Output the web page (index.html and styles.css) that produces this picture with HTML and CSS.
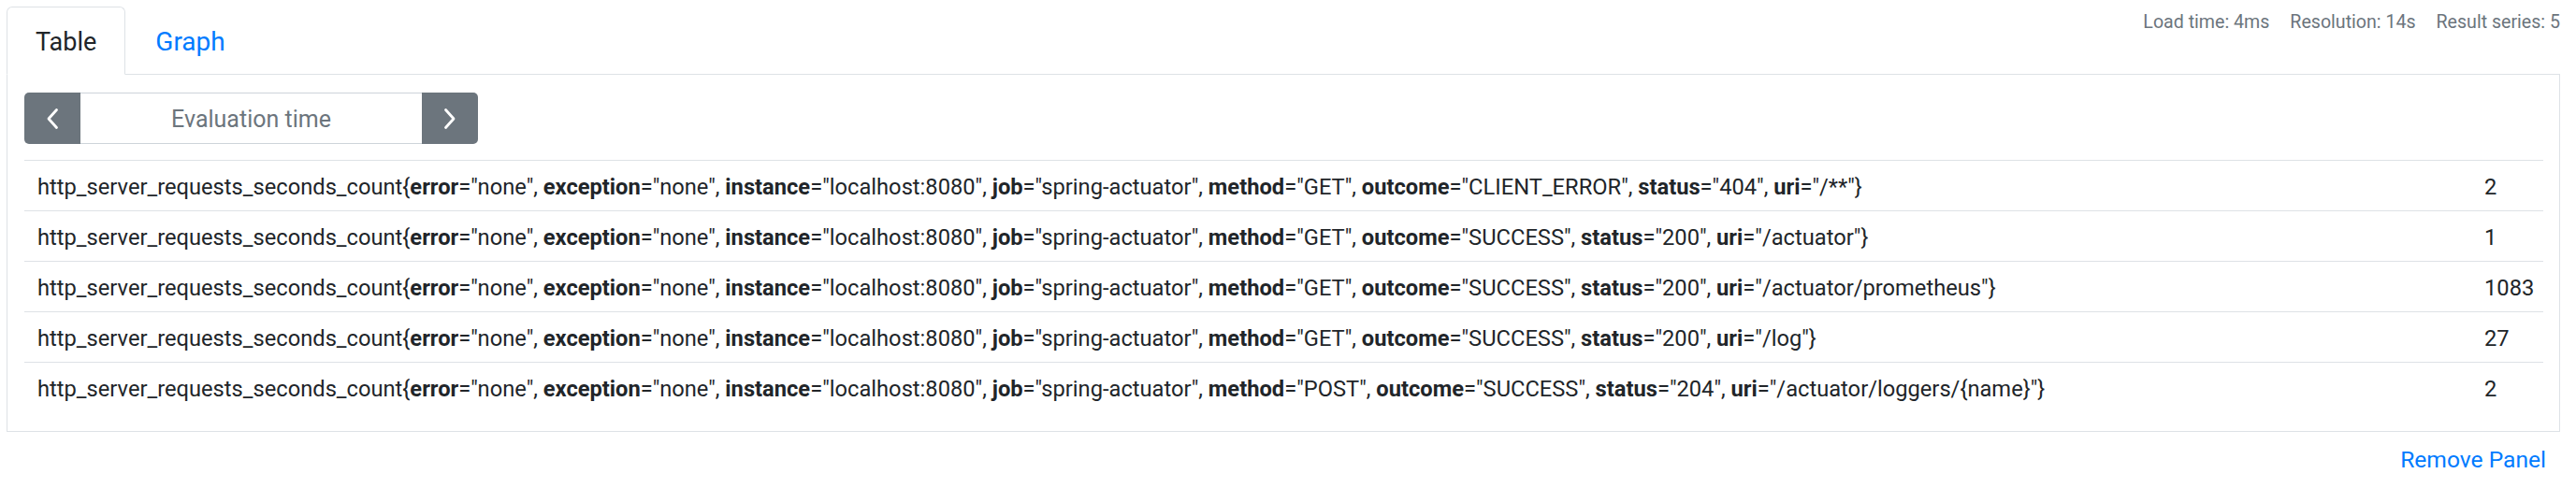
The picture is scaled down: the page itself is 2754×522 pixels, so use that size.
FILE: index.html
```html
<!DOCTYPE html>
<html lang="en">
<head>
<meta charset="utf-8">
<title>Prometheus panel</title>
<link rel="stylesheet" href="styles.css">
</head>
<body>
<div class="panel">
  <div class="nav-row">
    <ul class="tabs">
      <li class="tab active">Table</li>
      <li class="tab link">Graph</li>
    </ul>
    <div class="stats">
      <span>Load time: 4ms</span>
      <span>Resolution: 14s</span>
      <span>Result series: 5</span>
    </div>
  </div>
  <div class="tab-content">
    <div class="eval-group">
      <button class="eval-btn left" type="button" aria-label="Previous">
        <svg width="14" height="24" viewBox="0 0 14 24"><path d="M11.5 2.5 L3 12 L11.5 21.5" fill="none" stroke="#fff" stroke-width="2.8" stroke-linecap="round" stroke-linejoin="round"/></svg>
      </button>
      <div class="eval-input">Evaluation time</div>
      <button class="eval-btn right" type="button" aria-label="Next">
        <svg width="14" height="24" viewBox="0 0 14 24"><path d="M2.5 2.5 L11 12 L2.5 21.5" fill="none" stroke="#fff" stroke-width="2.8" stroke-linecap="round" stroke-linejoin="round"/></svg>
      </button>
    </div>
    <div class="table">
      <div class="row">
        <div class="series">http_server_requests_seconds_count{<b>error</b>="none", <b>exception</b>="none", <b>instance</b>="localhost:8080", <b>job</b>="spring-actuator", <b>method</b>="GET", <b>outcome</b>="CLIENT_ERROR", <b>status</b>="404", <b>uri</b>="/**"}</div>
        <div class="value">2</div>
      </div>
      <div class="row">
        <div class="series">http_server_requests_seconds_count{<b>error</b>="none", <b>exception</b>="none", <b>instance</b>="localhost:8080", <b>job</b>="spring-actuator", <b>method</b>="GET", <b>outcome</b>="SUCCESS", <b>status</b>="200", <b>uri</b>="/actuator"}</div>
        <div class="value">1</div>
      </div>
      <div class="row">
        <div class="series">http_server_requests_seconds_count{<b>error</b>="none", <b>exception</b>="none", <b>instance</b>="localhost:8080", <b>job</b>="spring-actuator", <b>method</b>="GET", <b>outcome</b>="SUCCESS", <b>status</b>="200", <b>uri</b>="/actuator/prometheus"}</div>
        <div class="value">1083</div>
      </div>
      <div class="row">
        <div class="series">http_server_requests_seconds_count{<b>error</b>="none", <b>exception</b>="none", <b>instance</b>="localhost:8080", <b>job</b>="spring-actuator", <b>method</b>="GET", <b>outcome</b>="SUCCESS", <b>status</b>="200", <b>uri</b>="/log"}</div>
        <div class="value">27</div>
      </div>
      <div class="row">
        <div class="series">http_server_requests_seconds_count{<b>error</b>="none", <b>exception</b>="none", <b>instance</b>="localhost:8080", <b>job</b>="spring-actuator", <b>method</b>="POST", <b>outcome</b>="SUCCESS", <b>status</b>="204", <b>uri</b>="/actuator/loggers/{name}"}</div>
        <div class="value">2</div>
      </div>
    </div>
  </div>
  <div class="footer">
    <a class="remove" href="#">Remove Panel</a>
  </div>
</div>
</body>
</html>
```
FILE: styles.css
```css
* { box-sizing: border-box; }

html, body {
  margin: 0;
  padding: 0;
  background: #fff;
}

body {
  font-family: Roboto, "Liberation Sans", sans-serif;
  color: #212529;
}

.panel {
  padding: 7px 17px 0 7px;
}

.nav-row {
  display: flex;
  align-items: flex-start;
  border-bottom: 1px solid #dee2e6;
}

.tabs {
  display: flex;
  list-style: none;
  margin: 0;
  padding: 0;
}

.tab {
  height: 73px;
  line-height: 74px;
  padding: 0 30px;
  font-size: 27px;
  border: 1px solid transparent;
  border-top-left-radius: 6px;
  border-top-right-radius: 6px;
  margin-bottom: -1px;
}

.tab.active {
  color: #212529;
  background: #fff;
  border-color: #dee2e6 #dee2e6 #fff;
}

.tab.link {
  color: #007bff;
  padding-left: 31px;
  font-size: 28px;
}

.stats {
  margin-left: auto;
  margin-top: 2px;
  display: flex;
  gap: 22px;
  font-size: 19.6px;
  line-height: 30px;
  color: #6c757d;
}

.tab-content {
  border: 1px solid #dee2e6;
  border-top: none;
  padding: 19px 17px 20px 18px;
}

.eval-group {
  display: flex;
  width: 485px;
  height: 55px;
}

.eval-btn {
  width: 60px;
  height: 55px;
  border: none;
  background: #6c757d;
  display: flex;
  align-items: center;
  justify-content: center;
  padding: 0;
}

.eval-btn.left {
  border-radius: 5px 0 0 5px;
}

.eval-btn.right {
  border-radius: 0 5px 5px 0;
}

.eval-input {
  flex: 1;
  border-top: 1px solid #ced4da;
  border-bottom: 1px solid #ced4da;
  display: flex;
  align-items: center;
  justify-content: center;
  padding-top: 2px;
  font-size: 25px;
  color: #6c757d;
}

.table {
  margin-top: 17px;
}

.row {
  display: grid;
  grid-template-columns: 1fr 77px;
  border-top: 1px solid #dee2e6;
}

.series,
.value {
  font-size: 23.7px;
  line-height: 38px;
  padding: 8.5px 0 6.5px 14px;
  white-space: nowrap;
}

.series b {
  font-weight: 700;
}

.footer {
  display: flex;
  justify-content: flex-end;
  padding: 12px 15px 0 0;
}

.remove {
  font-size: 24.6px;
  line-height: 36px;
  color: #007bff;
  text-decoration: none;
}
```
